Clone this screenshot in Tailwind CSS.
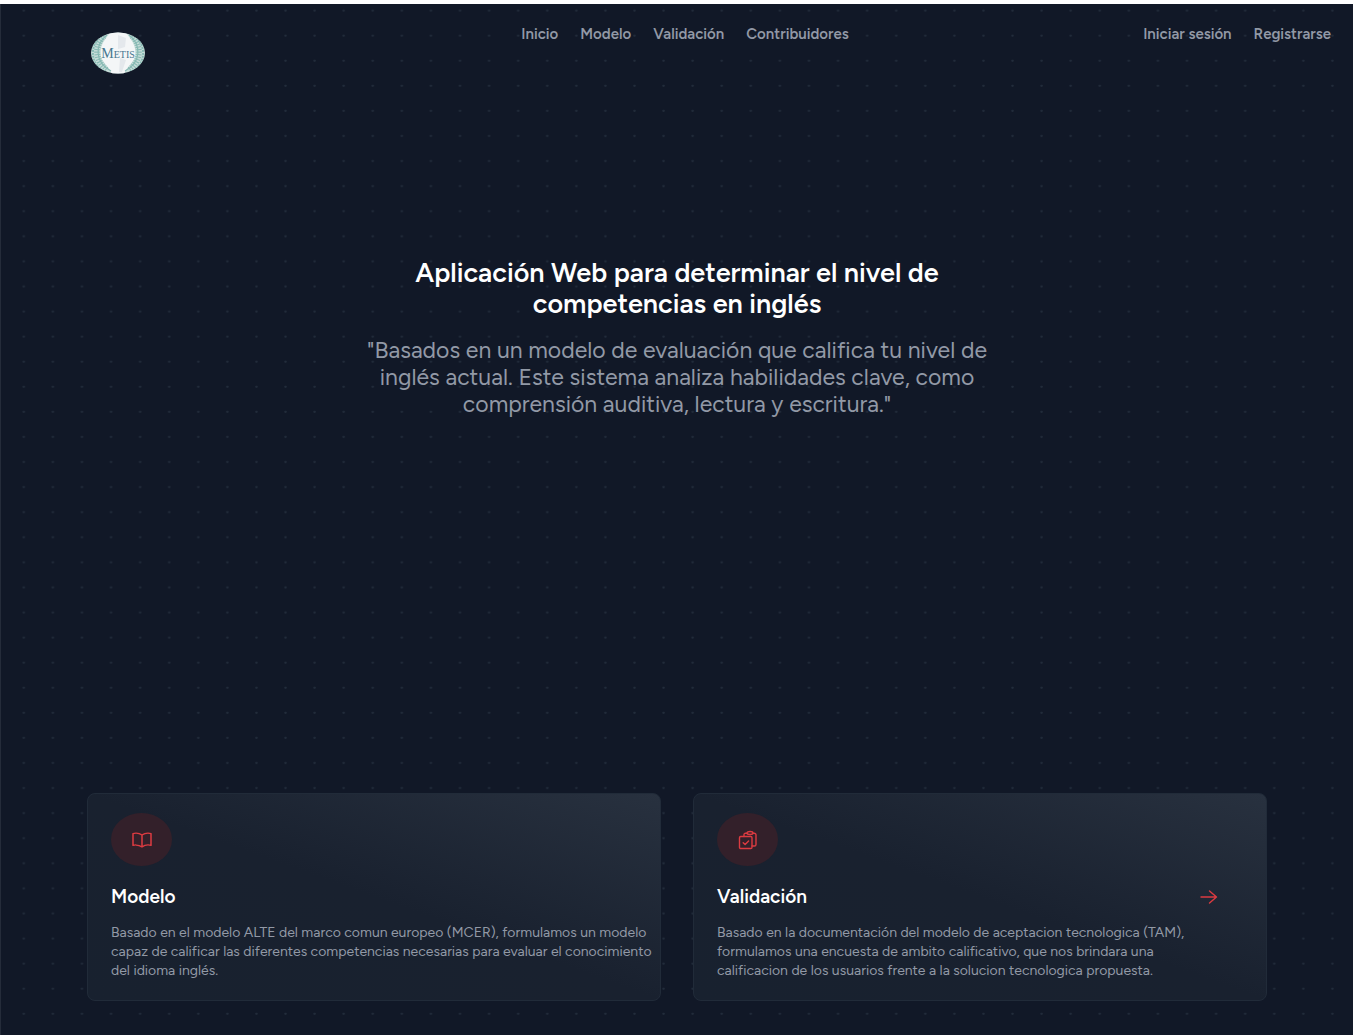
<!DOCTYPE html>
<html lang="es">
<head>
<meta charset="utf-8">
<meta name="viewport" content="width=device-width, initial-scale=1">
<title>Metis</title>
<script src="https://cdn.jsdelivr.net/npm/@tailwindcss/browser@4"></script>
</head>
<body class="bg-white pt-1 font-['Figtree','Inter',sans-serif] antialiased">
<div class="relative isolate flex min-h-[calc(100vh-4px)] flex-col border-l border-[#252c3a] bg-[#111827]">
  <!-- Dotted backdrop -->
  <svg class="absolute inset-0 -z-10 h-full w-full" aria-hidden="true">
    <defs><pattern id="dots" width="29.08" height="25.08" patternUnits="userSpaceOnUse"><ellipse cx="22.8" cy="6.6" rx="1.3" ry="1" fill="#222c3b"/></pattern></defs>
    <rect width="100%" height="100%" fill="url(#dots)"/>
  </svg>

  <header class="grid grid-cols-[1fr_auto_1fr] items-start pt-5 text-[15px] leading-5 font-semibold text-[#9299a6]">
    <a href="#" class="mt-2 ml-[89px] w-14" aria-label="Metis">
      <svg class="h-[42px] w-14" viewBox="0 0 56 42">
        <defs><clipPath id="oval"><ellipse cx="28" cy="21" rx="27" ry="20.5"/></clipPath></defs>
        <g clip-path="url(#oval)">
          <rect width="56" height="42" fill="#c6dcd8"/>
          <path d="M20 0H36C37 4 46 10 45.500 22C45 30 37 34 34 42H22C19 34 11 30 10.500 22C10 10 19 4 20 0Z" fill="#f4f6f7"/>
          <path d="M28 3l8 3-1 9-7 2zM30 26l6 2-4 12h-3z" fill="#e4e8ec"/>
          <g fill="none" stroke="#86b9b3">
            <path d="M17 3C5 12 4 30 21 39M39 3C51 12 52 30 35 39" stroke-width="1.2"/>
            <path d="M14 4C5 12 4 29 17 38M42 4C51 12 52 29 39 38" stroke-width="6" stroke-dasharray="1 1.5"/>
            <path d="M8 7C1 16 1 27 9 36M48 7C55 16 55 27 47 36" stroke-width="2" stroke-dasharray="2 1"/>
          </g>
        </g>
        <text x="28" y="26" text-anchor="middle" font-family="Liberation Serif, serif" font-weight="400" font-size="14" fill="#47778f">M<tspan font-size="10">ETIS</tspan></text>
      </svg>
    </a>
    <nav class="ml-4 flex gap-[22px]">
      <a href="#">Inicio</a><a href="#">Modelo</a><a href="#">Validación</a><a href="#">Contribuidores</a>
    </nav>
    <nav class="mr-[22px] flex justify-end gap-[22px]">
      <a href="#">Iniciar sesión</a><a href="#">Registrarse</a>
    </nav>
  </header>

  <main class="flex grow flex-col justify-between pt-[183px] pb-[34px]">
    <section class="mx-auto max-w-[680px] text-center">
      <h1 class="text-[27px] leading-[31px] font-semibold text-white">Aplicación Web para determinar el nivel de<br>competencias en inglés</h1>
      <p class="mt-[18px] text-[23px] leading-[27px] text-[#9299a6]">"Basados en un modelo de evaluación que califica tu nivel de<br>inglés actual. Este sistema analiza habilidades clave, como<br>comprensión auditiva, lectura y escritura."</p>
    </section>

    <section class="mr-[86px] ml-[86px] grid grid-cols-2 gap-8">
      <a href="#" class="flex rounded-lg border border-[#212b39] bg-linear-to-bl from-[#28313f] via-[#19212f] to-[#18212f] pt-[19px] pr-1 pb-5 pl-[23px]">
        <div>
          <div class="flex h-[53px] w-[61px] items-center justify-center rounded-[50%] bg-[#33202a]">
            <svg class="h-5 w-6" viewBox="0 0 24 24" preserveAspectRatio="none" fill="none" stroke="#dc3b41" stroke-width="1.5" stroke-linecap="round" stroke-linejoin="round"><path d="M12 6.042A8.967 8.967 0 006 3.75c-1.052 0-2.062.18-3 .512v14.25A8.987 8.987 0 016 18c2.305 0 4.408.867 6 2.292m0-14.25a8.966 8.966 0 016-2.292c1.052 0 2.062.18 3 .512v14.25A8.987 8.987 0 0018 18a8.967 8.967 0 00-6 2.292m0-14.25v14.25"/></svg>
          </div>
          <h2 class="mt-[19px] text-[19px] leading-6 font-semibold text-white">Modelo</h2>
          <p class="mt-[14px] text-[14px] leading-[19px] text-[#9299a6]">Basado en el modelo ALTE del marco comun europeo (MCER), formulamos un modelo<br>capaz de calificar las diferentes competencias necesarias para evaluar el conocimiento<br>del idioma inglés.</p>
        </div>
      </a>
      <a href="#" class="flex items-center rounded-lg border border-[#212b39] bg-linear-to-bl from-[#28313f] via-[#19212f] to-[#18212f] pt-[19px] pr-[23px] pb-5 pl-[23px]">
        <div class="grow">
          <div class="flex h-[53px] w-[61px] items-center justify-center rounded-[50%] bg-[#33202a]">
            <svg class="h-5 w-5" viewBox="0 0 20 20" fill="none" stroke="#dc3b41" stroke-width="1.4" stroke-linecap="round" stroke-linejoin="round"><rect x="1.5" y="6.5" width="12.5" height="12" rx="1.2"/><path d="M5.2 12.8l1.9 1.8 3.5-3.6M6 6.5V4.8C6 3.800 6.500 3.200 7.500 3.200H9M14 16h2.300C17.500 16 18 15.400 18 14.400V5C18 3.800 17.300 3.200 16.200 3.200H15"/><ellipse cx="12" cy="3" rx="3" ry="1.5"/></svg>
          </div>
          <h2 class="mt-[19px] text-[19px] leading-6 font-semibold text-white">Validación</h2>
          <p class="mt-[14px] text-[14px] leading-[19px] text-[#9299a6]">Basado en la documentación del modelo de aceptacion tecnologica (TAM),<br>formulamos una encuesta de ambito calificativo, que nos brindara una<br>calificacion de los usuarios frente a la solucion tecnologica propuesta.</p>
        </div>
        <svg class="mr-[22px] h-5 w-6 shrink-0" viewBox="0 0 24 20" fill="none" stroke="#dc3b41" stroke-width="1.4" stroke-linecap="round" stroke-linejoin="round"><path d="M4 10H19.500M12.500 4l7 6-7 6"/></svg>
      </a>
    </section>
  </main>
</div>
</body>
</html>
